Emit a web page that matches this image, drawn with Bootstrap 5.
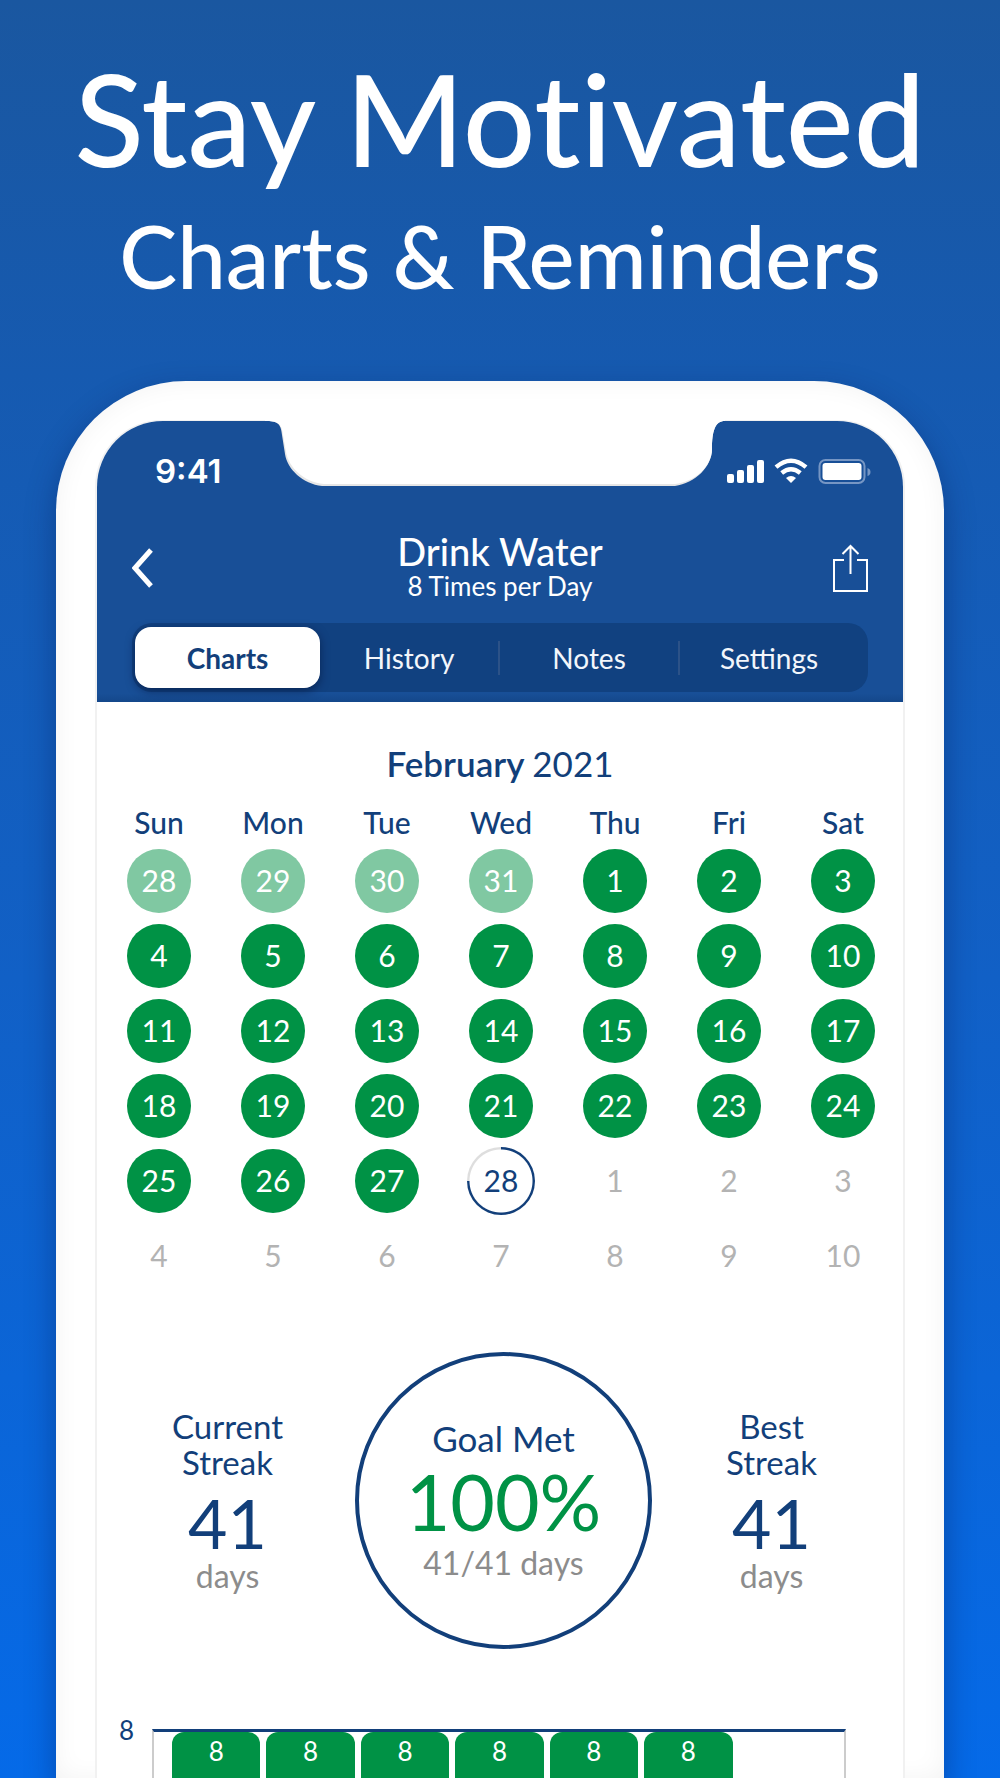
<!DOCTYPE html>
<html lang="en">
<head>
<meta charset="utf-8">
<meta name="viewport" content="width=device-width, initial-scale=1">
<title>Stay Motivated</title>
<link href="https://cdn.jsdelivr.net/npm/bootstrap@5.3.0/dist/css/bootstrap.min.css" rel="stylesheet">
<style>
  :root { --navy: #123f7a; --header: #184f97; --tabs: #114180; --green: #009245; --grey: #8c8c8c; }
  body { font-family: Lato, "Open Sans", sans-serif; font-variant-ligatures: no-common-ligatures; color: var(--navy); background: #0a62cc; }
  .promo { height: 100vh; background: linear-gradient(180deg, #1a57a0 0%, #165ab0 21%, #1160c6 55%, #056ae8 100%); }
  .headline { font-size: 128px; line-height: 140px; font-weight: 500; margin: 48px 0 0; }
  .subline { font-size: 87px; line-height: 100px; font-weight: 500; margin: 18px 0 75px; }
  .phone { margin: 0 56px; padding: 40px 41px 0; border-radius: 130px 130px 0 0; background: #fff;
    box-shadow: 0 12px 30px rgba(0, 20, 70, .36), inset 0 0 26px rgba(0, 0, 0, .05); }
  .screen { border-radius: 66px 66px 0 0; background: #fff; box-shadow: -1px 0 0 1px #f1f1f1, 1px 0 0 1px #f1f1f1; }
  .app-header { background: linear-gradient(180deg, var(--header) 97%, #14478a 100%); border-radius: 66px 66px 0 0; padding: 0 35px 10px; }
  .notch { top: -1px; }
  .status { height: 101px; padding: 0 0 2px 23px; }
  .clock { font: 600 33px/38px Inter, sans-serif; }
  .titlebar { height: 91px; margin-bottom: 10px; }
  .titlebar .btn { line-height: 0; }
  .app-name { padding-bottom: 6px; }
  .app-title { font-size: 38px; line-height: 42px; font-weight: 500; }
  .app-sub { font-size: 26px; line-height: 28px; }
  .segments { background: var(--tabs); border-radius: 20px; padding: 4px 10px 4px 3px; height: 69px; }
  .segments .nav-link { color: #f3f6fb; font-size: 28px; line-height: 36px; padding: 12px 0; border-radius: 16px; height: 61px; }
  .segments .nav-link.active { flex-grow: 1.04; color: var(--navy); background: #fff; font-weight: 700; box-shadow: 0 3px 10px rgba(0, 15, 50, .55); }
  .divider { width: 2px; height: 34px; background: #2c5288; }
  .month { font-size: 35px; line-height: 40px; font-weight: 600; margin: 41px 0 21px; }
  .month span { font-weight: 400; }
  .calendar { table-layout: fixed; width: calc(100% - 8px); margin: 0 3px 0 5px; text-align: center; }
  .calendar th { font-size: 30px; line-height: 36px; font-weight: 500; padding: 0 0 3px; }
  .calendar td { height: 75px; padding: 0; font-size: 30px; color: #b3b3b3; }
  .day { width: 64px; height: 64px; background: var(--green); color: #fff; }
  .day.past { background: #80c8a2; }
  .day.today { width: 68px; height: 68px; color: var(--navy);
    background: radial-gradient(circle, #fff 31px, transparent 32px), conic-gradient(var(--navy) 75%, #dedede 0); }
  .stats { padding: 0 0 0 11px; margin-top: 59px; }
  .current { padding-right: 8px; }
  .best { padding-right: 12px; }
  .stat-label { font-size: 33px; line-height: 36px; }
  .stat-number { font-size: 68px; line-height: 68px; margin: 9px 0 1px; }
  .stat-unit { font-size: 32px; line-height: 36px; color: var(--grey); }
  .ring { width: 297px; height: 297px; border: 4px solid var(--navy); }
  .ring .stat-label { font-size: 35px; }
  .percent { font-size: 77px; line-height: 76px; color: var(--green); margin: 7px 0 6px; }
  .chart { padding: 0 57px 0 22px; margin-top: 64px; min-height: 66px; }
  .axis { width: 33px; font-size: 26px; line-height: 34px; }
  .plot { border: solid #ccc; border-width: 0 2px; border-top: 3px solid var(--navy); margin-top: 16px; padding: 0 14px 0 15px; }
  .slot { border-radius: 12px 12px 0 0; margin: 0 3px; font-size: 26px; line-height: 34px; padding-top: 2px; color: #fff; }
  .filled { background: var(--green); }
</style>
<script defer src="https://cdn.jsdelivr.net/npm/bootstrap@5.3.0/dist/js/bootstrap.bundle.min.js"></script>
</head>
<body>
<main class="promo d-flex flex-column overflow-hidden">
  <header class="text-center text-white text-nowrap">
    <h1 class="headline">Stay Motivated</h1>
    <p class="subline">Charts &amp; Reminders</p>
  </header>

  <section class="phone flex-grow-1 d-flex flex-column">
    <div class="screen position-relative flex-grow-1 d-flex flex-column">
      <div class="app-header text-white">
        <svg class="notch position-absolute start-50 translate-middle-x" width="470" height="67" viewBox="0 -1 470 67" aria-hidden="true">
          <path fill="#e6e6e6" d="M0-1V0C12 0 16 2 17 14L20 33C22 48 38 63 57 65H410C430 62 447 46 447 28C447 10 450 0 460 0V-1Z"/>
          <path fill="#fff" d="M0-1V0C12 0 17 2 18 14L21 31C24 47 39 61 59 63H410C430 61 447 45 447 28C447 10 450 0 460 0V-1Z"/>
        </svg>
        <div class="status d-flex justify-content-between align-items-center">
          <span class="clock">9:41</span>
          <svg class="overflow-visible" width="141" height="24" viewBox="0 0 141 24" role="img" aria-label="Signal, Wi-Fi and battery">
            <g fill="#fff">
              <rect x="0" y="15" width="7" height="9" rx="2"/><rect x="10" y="11" width="7" height="13" rx="2"/>
              <rect x="20" y="6" width="7" height="18" rx="2"/><rect x="30" y="1" width="7" height="23" rx="2"/>
              <path d="M64 24l-5-5q5-4 10 0z"/>
            </g>
            <g fill="none" stroke="#fff" stroke-width="4.4">
              <path d="M49 8.200Q64-4.600 79 8.200"/><path d="M54.700 14Q64 6.400 73.300 14"/>
            </g>
            <rect x="92.500" y="1" width="45" height="23" rx="6" fill="none" stroke="#7696c4" stroke-width="2"/>
            <rect x="95.500" y="4" width="39" height="17" rx="3" fill="#fff"/>
            <path d="M140.500 9q3 1 3 4t-3 4z" fill="#7696c4"/>
          </svg>
        </div>
        <div class="titlebar d-flex justify-content-between align-items-center">
          <button class="btn p-0 border-0" type="button" aria-label="Back">
            <svg width="36" height="40" viewBox="0 0 36 40" fill="none" stroke="#fff" stroke-width="5"><path d="M19 2L3 20l16 18"/></svg>
          </button>
          <div class="app-name text-center">
            <div class="app-title">Drink Water</div>
            <div class="app-sub">8 Times per Day</div>
          </div>
          <button class="btn p-0 border-0" type="button" aria-label="Share">
            <svg width="36" height="48" viewBox="0 0 36 48" fill="none" stroke="#fff" stroke-width="2"><path d="M12 16H2v31h33V16H25M18.500 30V2M10.500 10l8-8 8 8"/></svg>
          </button>
        </div>
        <nav class="segments nav nav-pills flex-nowrap align-items-center">
          <button class="nav-link active col" type="button">Charts</button>
          <button class="nav-link col" type="button">History</button>
          <span class="divider"></span>
          <button class="nav-link col" type="button">Notes</button>
          <span class="divider"></span>
          <button class="nav-link col" type="button">Settings</button>
        </nav>
      </div>

      <h2 class="month text-center">February <span>2021</span></h2>
      <table class="calendar">
        <thead><tr><th>Sun</th><th>Mon</th><th>Tue</th><th>Wed</th><th>Thu</th><th>Fri</th><th>Sat</th></tr></thead>
        <tbody id="days"></tbody>
      </table>

      <div class="stats d-flex align-items-center text-center">
        <div class="current col">
          <div class="stat-label">Current<br>Streak</div>
          <div class="stat-number">41</div>
          <div class="stat-unit">days</div>
        </div>
        <div class="ring rounded-circle d-flex flex-column justify-content-center flex-shrink-0">
          <div class="stat-label">Goal Met</div>
          <div class="percent">100%</div>
          <div class="stat-unit">41/41 days</div>
        </div>
        <div class="best col">
          <div class="stat-label">Best<br>Streak</div>
          <div class="stat-number">41</div>
          <div class="stat-unit">days</div>
        </div>
      </div>

      <div class="chart flex-grow-1 d-flex">
        <div class="axis">8</div>
        <div class="plot flex-grow-1 d-flex text-center">
          <div class="slot filled col">8</div><div class="slot filled col">8</div><div class="slot filled col">8</div>
          <div class="slot filled col">8</div><div class="slot filled col">8</div><div class="slot filled col">8</div>
          <div class="slot col"></div>
        </div>
      </div>
    </div>
  </section>
</main>
<script>
  // Six weeks: four trailing January days, February, then the first days of March.
  const cells = [28, 29, 30, 31];
  for (let d = 1; d <= 28; d++) cells.push(d);
  for (let d = 1; d <= 10; d++) cells.push(d);
  const body = document.getElementById('days');
  for (let w = 0; w < 6; w++) {
    const row = body.insertRow();
    for (let i = w * 7; i < w * 7 + 7; i++) {
      const cell = row.insertCell();
      if (i > 31) { cell.textContent = cells[i]; continue; }
      const kind = i < 4 ? 'past' : i === 31 ? 'today' : '';
      cell.innerHTML = `<div class="day ${kind} rounded-circle mx-auto d-flex align-items-center justify-content-center">${cells[i]}</div>`;
    }
  }
</script>
</body>
</html>
